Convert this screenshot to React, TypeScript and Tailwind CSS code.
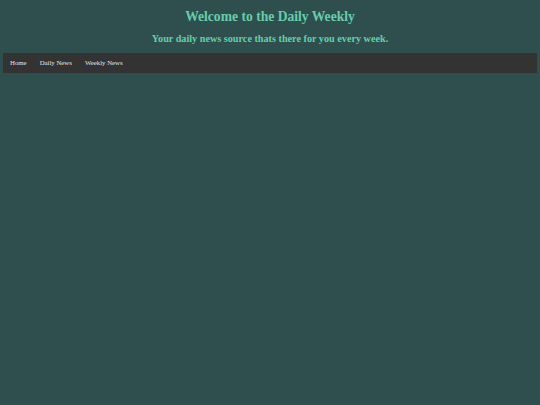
export default function App() {
  return (
    <div className="min-h-[405px] bg-[#2f4f4f] px-[3px] pt-[9px] font-['Liberation_Serif',serif]">
      <header className="text-center text-[#66cdaa]">
        <h1 className="text-[13.6px] leading-[16px] font-bold">Welcome to the Daily Weekly</h1>
        <h2 className="mt-[7px] text-[10.2px] leading-[14px] font-bold">
          Your daily news source thats there for you every week.
        </h2>
      </header>
      <nav className="mt-[7px] flex h-[20px] items-center gap-[13px] bg-[#333333] px-[7px] text-[6.8px] text-[#e6e6e6]">
        <a href="#">Home</a>
        <a href="#">Daily News</a>
        <a href="#">Weekly News</a>
      </nav>
    </div>
  );
}
